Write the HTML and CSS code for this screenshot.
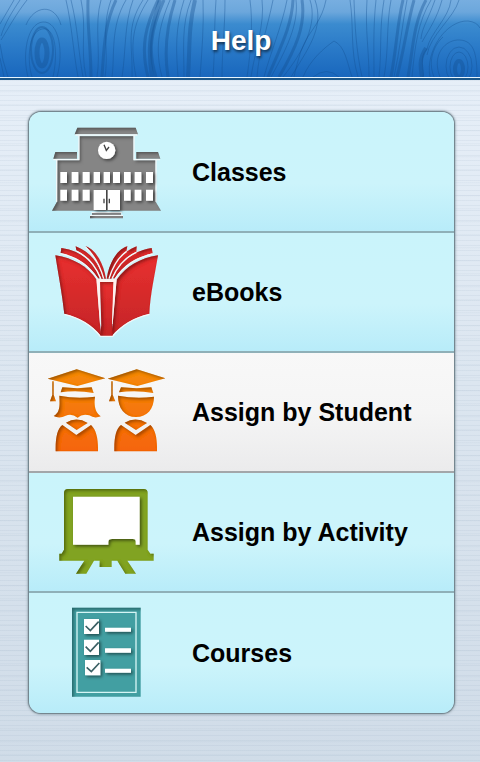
FILE: index.html
```html
<!DOCTYPE html>
<html lang="en">

<head>
    <meta charset="UTF-8">
    <meta name="viewport" content="width=device-width, initial-scale=1.0">
    <title>Help</title>
    <link rel="stylesheet" href="styles.css">
</head>

<body>
    <!-- shared filters and fills -->
    <svg class="defs" width="0" height="0" aria-hidden="true">
        <defs>
            <filter id="inset" x="-10%" y="-10%" width="120%" height="120%">
                <feComponentTransfer in="SourceAlpha" result="inv">
                    <feFuncA type="linear" slope="-1" intercept="1" />
                </feComponentTransfer>
                <feGaussianBlur in="inv" stdDeviation="5" />
                <feOffset dx="5" dy="5" result="blur" />
                <feFlood flood-color="#000" flood-opacity="0.6" />
                <feComposite in2="blur" operator="in" />
                <feComposite in2="SourceAlpha" operator="in" result="shade" />
                <feMerge>
                    <feMergeNode in="SourceGraphic" />
                    <feMergeNode in="shade" />
                </feMerge>
            </filter>
            <filter id="drop" x="-30%" y="-30%" width="170%" height="170%">
                <feDropShadow dx="5" dy="5" stdDeviation="5" flood-color="#000" flood-opacity="0.5" />
            </filter>
            <linearGradient id="red" x1="0" y1="0" x2="0" y2="1">
                <stop offset="0" stop-color="#e8302f" />
                <stop offset="1" stop-color="#c42527" />
            </linearGradient>
            <linearGradient id="orange" gradientUnits="userSpaceOnUse" x1="0" y1="28" x2="0" y2="275">
                <stop offset="0" stop-color="#f58a08" />
                <stop offset="1" stop-color="#f5640f" />
            </linearGradient>
        </defs>
    </svg>

    <header class="header">
        <svg class="wood" viewBox="0 0 480 77" preserveAspectRatio="none" aria-hidden="true">
            <!-- left knot -->
            <g class="grain">
                <ellipse cx="42" cy="53" rx="5" ry="13" stroke-width="5" />
                <ellipse cx="42" cy="50" rx="11" ry="23" stroke-width="2" />
                <path d="M28 77C22 55 27 23 43 22S64 52 57 77M26 25C34 5 55 3 61 25M32 77C27 61 28 32 42 29S58 55 53 77" />
                <path d="M20 0C12 12 5 23 1 36M27 0C16 14 8 29 1 40M14 0L0 24M0 44Q2 60 8 77M0 58L4 77" />
            </g>
            <!-- long grain -->
            <g class="grain">
                <path d="M66 0C72 26 73 50 78 77M71 0C78 28 78 50 83 77M81 0C87 28 80 48 86 77M101 0C94 25 101 52 97 77M111 0C101 28 109 50 105 77M126 0C110 27 115 55 112 77M133 0C124 24 126 52 122 77" />
                <path stroke-width="3" d="M88 0C87 28 91 48 91 77M116 0C104 25 104 50 102 77M158 0C146 25 140 46 148 77M164 0C150 32 148 52 156 77M175 0C166 28 164 52 168 77" />
                <path d="M143 0C125 28 133 45 132 77M148 0C132 25 130 45 136 77M170 0C158 28 155 50 162 77M184 0C175 28 176 50 178 77M191 0C181 25 184 50 184 77M203 0C204 25 202 50 200 77M216 0C214 28 215 50 213 77M225 0C225 28 222 50 222 77" />
                <path stroke-width="4" d="M195 0C188 28 190 50 188 77M160 0C151 28 147 45 152 77" />
            </g>
            <g class="grain">
                <path d="M250 0C253 22 251 50 247 77M262 0C265 24 255 50 251 77M273 0C267 30 259 50 257 77M287 0C282 26 270 54 264 77M296 0C299 24 286 50 271 77M310 0C318 24 303 52 283 77M315 0C325 28 307 50 291 77M326 0C322 20 312 29 306 40S297 64 294 77" />
                <path stroke-width="3" d="M302 0C306 25 296 48 279 77M293 0C292 26 279 50 268 77" />
                <path d="M303 77C310 60 324 48 334 41C345 46 347 62 352 77M313 77Q327 66 339 77M350 0C354 26 350 50 358 77M354 0C355 26 356 50 362 77M367 0C365 30 369 50 369 77M376 0C373 28 374 50 374 77M384 0C379 30 382 50 379 77M391 0C386 26 389 50 384 77" />
                <path stroke-width="3" d="M403 0C397 25 397 45 391 77M414 0C407 25 404 50 397 77M426 0C413 24 413 50 408 77" />
                <path d="M407 0C402 25 400 50 394 77M431 0C418 22 415 45 412 77M435 0C427 22 422 28 421 39M442 0C437 18 430 28 422 42M451 0C449 18 430 33 427 49C418 58 425 70 423 77M459 0C454 18 430 35 427 55" />
                <path stroke-width="4" d="M426 48C418 60 421 70 422 77" />
            </g>
            <!-- right knot -->
            <g class="grain">
                <ellipse cx="459" cy="69" rx="4" ry="8" stroke-width="4" />
                <ellipse cx="459" cy="67" rx="9" ry="15" />
                <ellipse cx="459" cy="66" rx="13" ry="19" />
                <path d="M440 77C431 54 446 39 460 40S477 54 477 77M430 77C425 50 447 20 468 21Q477 22 480 28M434 77C427 60 435 44 443 37" />
            </g>
        </svg>
        <h1 class="title">Help</h1>
    </header>

    <main class="main">
        <nav class="menu">
            <a class="item" href="#classes">
                <svg class="icon" viewBox="0 4 390 330" aria-hidden="true">
                    <g class="school">
                        <path filter="url(#inset)" d="M52 134H117V62H281V134H347V258L363 285H36L51 258Z" />
                        <path filter="url(#inset)" d="M112 36H287L294 56H104ZM46 109H111V129H40ZM289 109H354L361 129H289ZM156 291H243V298H249V308H150V298H156Z" />
                    </g>
                    <path class="edge" d="M106 58H292M117 60V132H40M282 60V132H360M50 134V258M348 134V258M154 291H246M150 299H249" />
                    <g fill="#fff" filter="url(#drop)">
                        <circle cx="200" cy="104" r="26" />
                        <path d="M61 169h20v33h-20zM95 169h20v33h-20zM128 169h21v33h-21zM161 169h19v33h-19zM191 169h19v33h-19zM219 169h21v33h-21zM252 169h20v33h-20zM284 169h20v33h-20zM318 169h21v33h-21z" />
                        <path d="M61 222h20v33h-20zM95 222h20v33h-20zM128 222h21v33h-21zM252 222h20v33h-20zM284 222h20v33h-20zM318 222h21v33h-21zM161 223h37v60h-37zM203 223h37v60h-37z" />
                    </g>
                    <path fill="none" stroke="#444" stroke-width="4" d="M192 87L199 104L207 94M200 223V283M192 249V263M208 249V263" />
                </svg>
                <span class="label">Classes</span>
            </a>
            <a class="item" href="#ebooks">
                <svg class="icon" viewBox="0 5 390 330" aria-hidden="true">
                    <g class="book" fill="url(#red)">
                        <path filter="url(#inset)" d="M137 33C166 43 190 81 198 130H191C180 90 158 55 137 33ZM107 33C147 48 178 82 190 130H184C167 91 141 62 109 45ZM64 38C119 45 159 77 181 129H174C147 88 111 65 62 53ZM262 33C231 43 208 81 200 130H207C220 90 240 62 259 48ZM290 33C249 48 219 84 208 130H215C233 91 257 64 289 49ZM335 38C278 47 240 79 217 129H225C251 88 288 66 338 54Z" />
                        <path filter="url(#inset)" d="M46 60C99 68 144 94 170 133L180 266L184 303C157 270 120 247 73 236C66 175 55 116 46 60ZM354 60C301 68 257 94 230 133L218 266L214 303C243 270 280 247 328 236C331 175 345 116 354 60Z" />
                        <path filter="url(#inset)" d="M180 139H222L216 270L219 303H180L184 270Z" />
                    </g>
                    <path class="edge" d="M62 55C111 65 147 91 172 130M109 47C141 62 167 91 182 130M137 36C158 55 180 90 191 130M338 56C288 67 251 91 226 130M289 51C257 65 233 91 216 130M260 48C240 62 219 90 207 130M73 237C120 248 157 272 181 303H218C243 272 280 248 328 237" />
                    <path fill="#fff0ed" d="M169 132H230L218 266H216L220 140H179L182 266H180Z" />
                </svg>
                <span class="label">eBooks</span>
            </a>
            <a class="item active" href="#student">
                <svg class="icon" viewBox="0 -8 390 330" aria-hidden="true">
                    <g fill="url(#orange)">
                        <path filter="url(#inset)" d="M23 57L110 29L196 56L112 79ZM67 83Q112 88 155 83L161 100Q111 91 62 98ZM37 65H41V105L48 125H30L37 105ZM58 108Q110 119 165 111C162 135 164 157 182 170Q164 178 148 167Q127 161 113 174Q95 160 77 168Q59 178 41 169C62 157 59 135 58 108Z" />
                        <path filter="url(#inset)" d="M78 189Q110 170 143 190L110 211ZM67 196L109 226L153 196C169 211 175 237 174 275H47C46 235 52 207 67 196Z" />
                        <path filter="url(#inset)" d="M203 57L290 29L376 56L292 79ZM243 83Q290 88 334 83L340 100Q289 91 237 98ZM214 65H218V105L226 125H207L214 105ZM234 108Q289 119 342 111C342 147 322 172 288 172S234 145 234 108Z" />
                        <path filter="url(#inset)" d="M254 189Q287 170 321 190L288 211ZM243 196L287 226L331 196C347 211 352 237 351 275H223C222 235 228 207 243 196Z" />
                    </g>
                </svg>
                <span class="label">Assign by Student</span>
            </a>
            <a class="item" href="#activity">
                <svg class="icon" viewBox="0 -2 390 330" aria-hidden="true">
                    <path fill="#81a321" filter="url(#inset)" d="M84 34H311Q323 34 323 46V216L331 228H341V249H262L288 288H256L232 249H215V268H179V249H162L139 288H108L133 249H58V228H65L72 216V46Q72 34 84 34Z" />
                    <path fill="#fff" filter="url(#drop)" d="M99 57H299V201H287V191Q287 184 280 184H215Q205 184 205 194V201H99Z" />
                </svg>
                <span class="label">Assign by Activity</span>
            </a>
            <a class="item" href="#courses">
                <svg class="icon" viewBox="-30 22 390 330" aria-hidden="true">
                    <path fill="#439fa2" filter="url(#inset)" d="M66 51H272V318H66Z" />
                    <path fill="none" stroke="#d5f5f5" stroke-width="4" d="M81 65H258V305H81Z" />
                    <path fill="#fff" filter="url(#drop)" d="M102 85h45v45h-45zM102 147h45v46h-45zM105 208h46v46h-46zM165 111h78v12h-78zM165 173h78v13h-78zM165 234h78v12h-78z" />
                    <path fill="none" stroke="#3c6165" stroke-width="5" d="M107 106L121 120L146 93M107 168L121 182L146 155M110 230L124 243L148 217" />
                </svg>
                <span class="label">Courses</span>
            </a>
        </nav>
    </main>
</body>

</html>
```
FILE: styles.css
```css
* {
    margin: 0;
    padding: 0;
    box-sizing: border-box;
}

body {
    min-height: 100vh;
    font-family: "Liberation Sans", Arial, sans-serif;
    background:
        repeating-linear-gradient(rgba(130, 155, 180, 0.1) 0, rgba(130, 155, 180, 0.1) 1px, transparent 1px, transparent 5px),
        repeating-linear-gradient(rgba(130, 155, 180, 0.08) 0, transparent 2px, transparent 13px),
        linear-gradient(#e9f1fa, #dce6f0 50%, #d0dce8);
}

a {
    text-decoration: none;
}

.defs {
    position: absolute;
}

.header {
    position: relative;
    display: flex;
    align-items: center;
    justify-content: center;
    height: 80px;
    border-bottom: 2px solid #1c5789;
    background: linear-gradient(#77aee0 0, #6ca7dc 12px, #3b8bcf 24px, #2a7ac8 48px, #1967bd 77px, #e8f6ff 77px);
}

.wood {
    position: absolute;
    top: 0;
    left: 0;
    width: 100%;
    height: 77px;
}

.grain {
    fill: none;
    stroke: #134f91;
    stroke-opacity: 0.38;
}

.title {
    position: relative;
    padding: 4px 0 0 2px;
    color: #fff;
    font-size: 28px;
    line-height: 32px;
    text-shadow: 1px 2px 3px rgba(0, 0, 0, 0.6);
}

.main {
    padding: 32px 26px 50px 29px;
}

.menu {
    overflow: hidden;
    border-radius: 12px;
    box-shadow: 0 0 1px 1px #71828b, 0 0 3px 1px #8798a2;
}

.item {
    display: flex;
    align-items: center;
    height: 120px;
    padding-left: 11px;
    color: #000;
    background: linear-gradient(#caf4fb, #ccf4fb 60%, #b8ecf9);
    border-bottom: 2px solid #8fb0b8;
}

.item:first-child {
    height: 121px;
}

.item:last-child {
    border-bottom: none;
}

.active {
    background: linear-gradient(#f8f8f8, #f5f5f5 50%, #ebebec);
    border-bottom-color: #a3a6a9;
}

.icon {
    flex: none;
    width: 130px;
    height: 110px;
}

.school {
    fill: #858585;
}

.edge {
    fill: none;
    stroke: #f2f8f9;
    stroke-width: 4;
}

.label {
    padding-left: 22px;
    font-size: 25px;
    font-weight: bold;
    line-height: 30px;
}
```
